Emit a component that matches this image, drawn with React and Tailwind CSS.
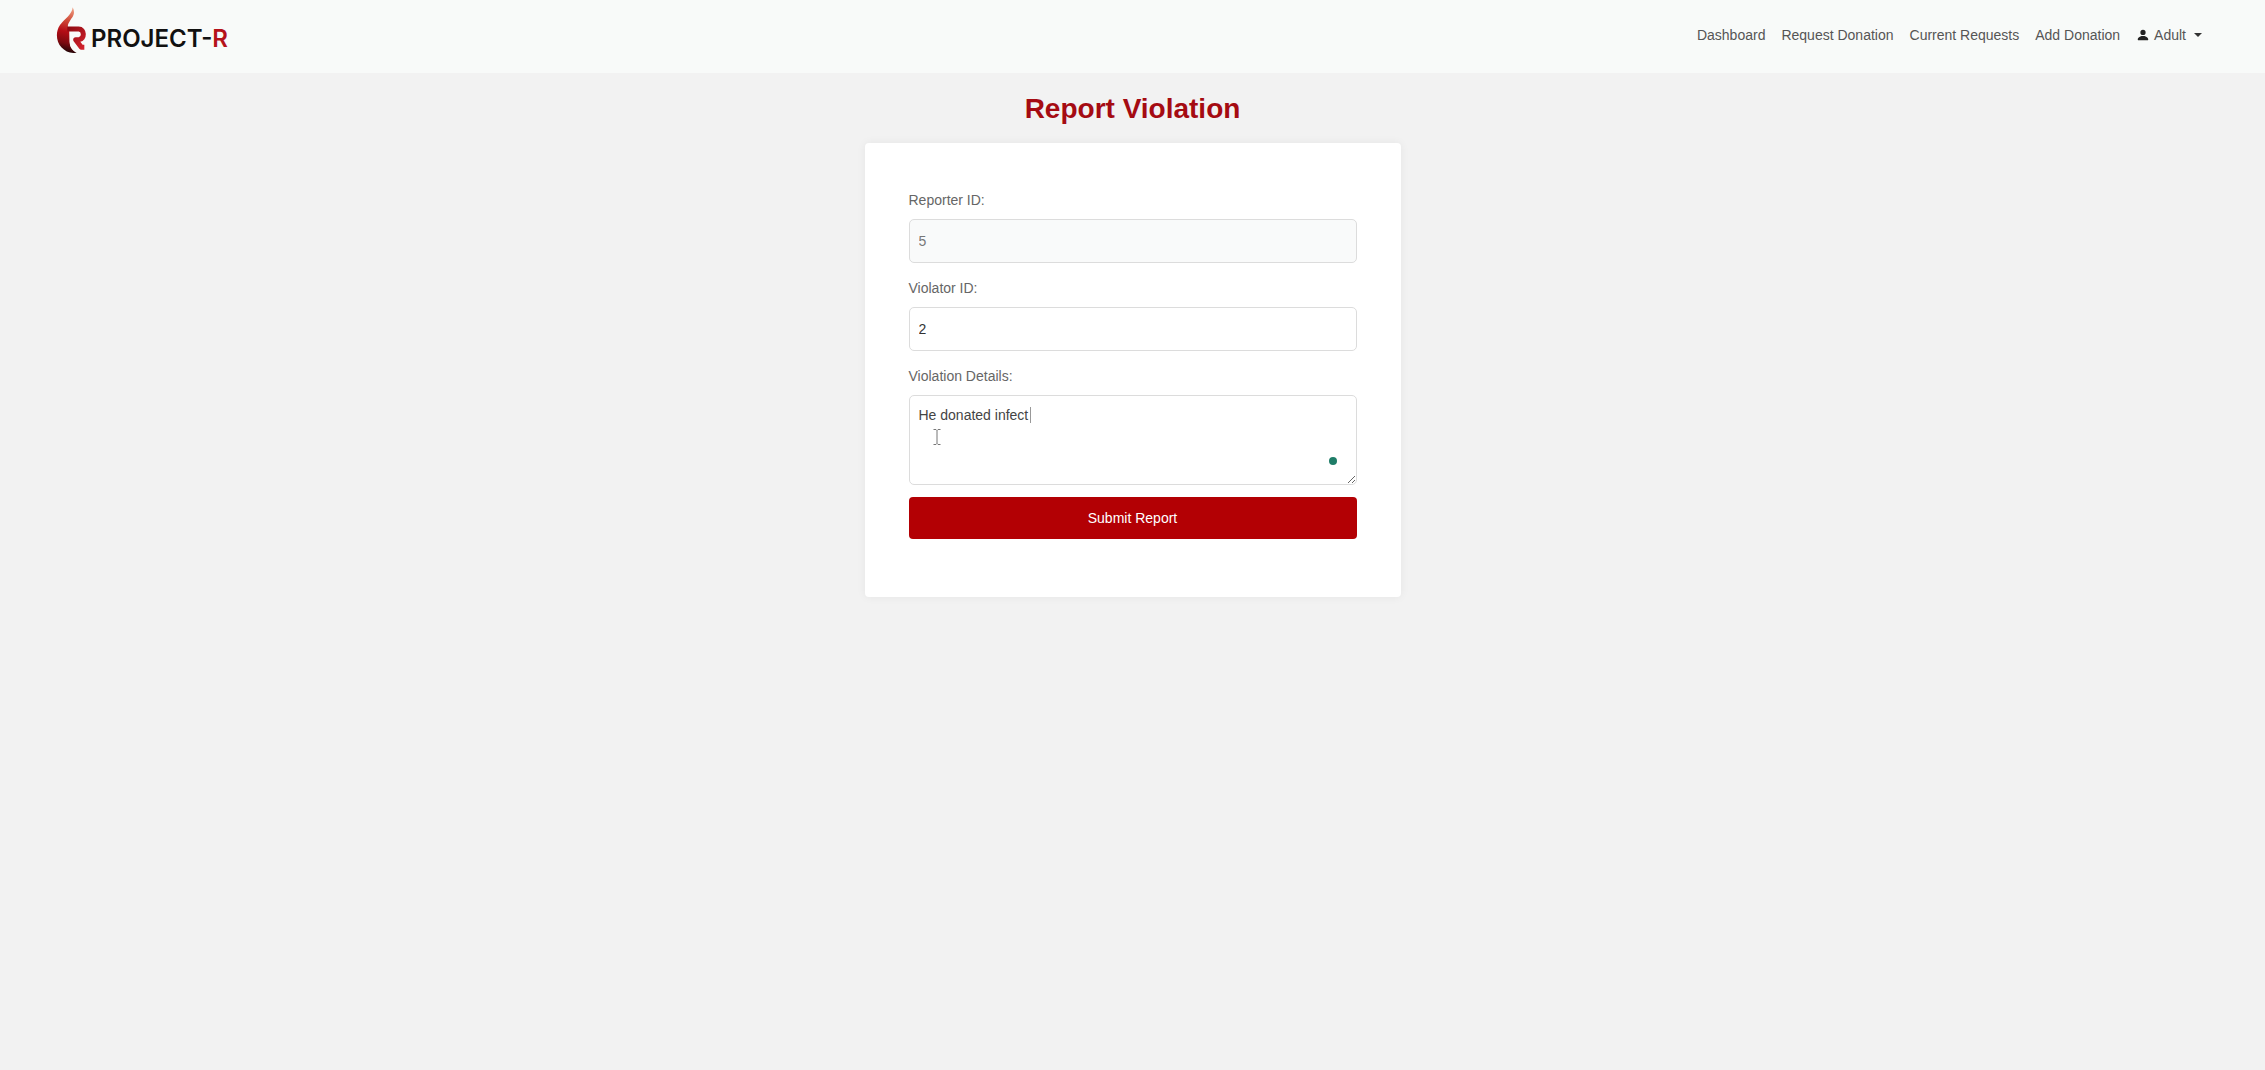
import React, { useState } from "react";
import { BsPersonFill } from "react-icons/bs";

const links = ["Dashboard", "Request Donation", "Current Requests", "Add Donation"];

function Logo() {
  return (
    <a href="#" className="flex items-end gap-1">
      <svg viewBox="48 15 93 147" className="h-[49px] w-[31px]">
        <defs>
          <linearGradient id="flame" x1="0.7" y1="0" x2="0.6" y2="1">
            <stop offset="0" stopColor="#f0a285" />
            <stop offset="0.3" stopColor="#cf4a38" />
            <stop offset="0.55" stopColor="#b40d16" />
            <stop offset="0.8" stopColor="#7c0a10" />
            <stop offset="1" stopColor="#1c0507" />
          </linearGradient>
          <linearGradient id="letter" x1="0" y1="0" x2="1" y2="1">
            <stop offset="0" stopColor="#8e0a12" />
            <stop offset="1" stopColor="#d3222c" />
          </linearGradient>
        </defs>
        <path
          d="M98 19 C97 40 74 54 60 72 C46 92 48 122 64 139 C76 152 92 159 110 155 C97 149 90 138 89 122 L88 90 C84 82 82 76 85 68 C88 62 92 55 96 50 C103 41 104 30 98 19 Z"
          fill="url(#flame)"
        />
        <path d="M89 90 H106 V116 L112 128 L104 150 C94 144 89 136 89 122 Z" fill="#f8faf9" />
        <path
          d="M82 84 H116 C134 84 135 114 117 116 H107 L124 139 H133"
          fill="none"
          stroke="url(#letter)"
          strokeWidth="15"
          strokeLinejoin="round"
        />
      </svg>
      <span className="font-['Inter'] text-2xl font-semibold text-[#111]">
        PROJECT-<span className="text-[#b5121b]">R</span>
      </span>
    </a>
  );
}

function Navbar() {
  return (
    <header className="flex h-[73px] items-start justify-between bg-[#f8faf9] pl-14 pr-[63px]">
      <div className="pt-1.5">
        <Logo />
      </div>
      <nav className="flex items-center gap-4 pt-6 text-[#555]">
        {links.map((link) => (
          <a key={link} href="#" className="hover:text-black">
            {link}
          </a>
        ))}
        <button type="button" className="flex items-center gap-1">
          <BsPersonFill className="size-3.5 text-[#222]" />
          Adult
          <svg viewBox="0 0 8 4" className="ml-1 h-1 w-2">
            <path d="M0 0 H8 L4 4 Z" fill="#333" />
          </svg>
        </button>
      </nav>
    </header>
  );
}

export default function App() {
  const [violatorId, setViolatorId] = useState("2");
  const [details, setDetails] = useState("He donated infect");

  const submitHandler = (e) => {
    e.preventDefault();
  };

  return (
    <div className="min-h-screen bg-[#f2f2f2] font-['Liberation_Sans',Arial,sans-serif] text-sm leading-[22px]">
      <Navbar />
      <main className="flex flex-col items-center pt-[18px]">
        <h1 className="mb-4 text-[28px] font-bold leading-9 text-[#a50b12]">
          Report Violation
        </h1>

        <form
          onSubmit={submitHandler}
          className="w-full max-w-[536px] rounded bg-white px-11 pb-[58px] pt-[46px] shadow-[0_0_10px_rgba(0,0,0,0.06)]"
        >
          <div className="mb-3.5">
            <label htmlFor="reporterId" className="mb-2 block text-[#666]">
              Reporter ID:
            </label>
            <input
              id="reporterId"
              type="text"
              value="5"
              readOnly
              className="block w-full rounded-[5px] border border-[#dcdcdc] bg-[#f9fafa] px-[9px] py-2.5 text-[#777]"
            />
          </div>

          <div className="mb-3.5">
            <label htmlFor="violatorId" className="mb-2 block text-[#666]">
              Violator ID:
            </label>
            <input
              id="violatorId"
              type="text"
              value={violatorId}
              onChange={(e) => setViolatorId(e.target.value)}
              className="block w-full rounded-[5px] border border-[#dcdcdc] bg-white px-[9px] py-2.5 text-[#333]"
            />
          </div>

          <div className="mb-3">
            <label htmlFor="details" className="mb-2 block text-[#666]">
              Violation Details:
            </label>
            <div className="relative">
              <textarea
                id="details"
                value={details}
                onChange={(e) => setDetails(e.target.value)}
                className="block h-[90px] w-full resize-y rounded-[5px] border border-[#dcdcdc] bg-white px-[9px] py-2 text-[#444]"
              />
              {/* text caret */}
              <span className="pointer-events-none absolute left-[121px] top-3 h-4 w-px bg-[#999]" />
              {/* mouse pointer */}
              <svg
                viewBox="0 0 8 16"
                className="pointer-events-none absolute left-6 top-[34px] h-4 w-2"
                fill="none"
                stroke="#777"
              >
                <path d="M0.5 0.5 H3 L4 1.5 L5 0.5 H7.5 M4 1.5 V14.5 M0.5 15.5 H3 L4 14.5 L5 15.5 H7.5" />
              </svg>
              <span className="pointer-events-none absolute bottom-5 right-5 size-2 rounded-full bg-[#1f7d68]" />
            </div>
          </div>

          <button
            type="submit"
            className="block w-full rounded bg-[#b30004] py-2.5 font-medium text-white hover:bg-[#8f0003]"
          >
            Submit Report
          </button>
        </form>
      </main>
    </div>
  );
}
